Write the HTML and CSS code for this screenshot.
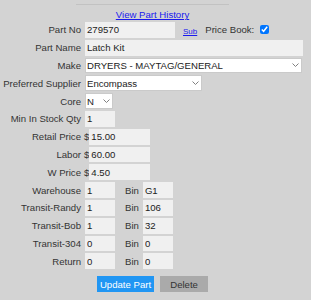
FILE: index.html
```html
<!DOCTYPE html>
<html>
<head>
    <title>Edit Part</title>
    <link rel="stylesheet" href="styles.css">
</head>
<body>
    <div class="part-form">
        <hr>
        <div class="history"><a href="#">View Part History</a></div>

        <div class="rows">
            <div class="row">
                <label>Part No</label>
                <div class="field">
                    <input type="text" class="w-no" value="279570"><a href="#" class="sub-link">Sub</a><span class="price-book">Price Book:</span><input type="checkbox" class="check" checked>
                </div>
            </div>
            <div class="row">
                <label>Part Name</label>
                <div class="field"><input type="text" class="w-name" value="Latch Kit"></div>
            </div>
            <div class="row">
                <label>Make</label>
                <div class="field">
                    <select class="w-make"><option>DRYERS - MAYTAG/GENERAL</option></select>
                </div>
            </div>
            <div class="row">
                <label>Preferred Supplier</label>
                <div class="field">
                    <select class="w-supplier"><option>Encompass</option></select>
                </div>
            </div>
            <div class="row">
                <label>Core</label>
                <div class="field">
                    <select class="w-core"><option>N</option><option>Y</option></select>
                </div>
            </div>
            <div class="row">
                <label>Min In Stock Qty</label>
                <div class="field"><input type="text" class="w-small" value="1"></div>
            </div>
            <div class="row">
                <label>Retail Price</label>
                <div class="field"><span class="dollar">$</span><input type="text" class="w-price" value="15.00"></div>
            </div>
            <div class="row">
                <label>Labor</label>
                <div class="field"><span class="dollar">$</span><input type="text" class="w-price" value="60.00"></div>
            </div>
            <div class="row">
                <label>W Price</label>
                <div class="field"><span class="dollar">$</span><input type="text" class="w-price" value="4.50"></div>
            </div>
            <div class="row">
                <label>Warehouse</label>
                <div class="field"><input type="text" class="w-small" value="1"><span class="bin">Bin</span><input type="text" class="w-small" value="G1"></div>
            </div>
            <div class="row">
                <label>Transit-Randy</label>
                <div class="field"><input type="text" class="w-small" value="1"><span class="bin">Bin</span><input type="text" class="w-small" value="106"></div>
            </div>
            <div class="row">
                <label>Transit-Bob</label>
                <div class="field"><input type="text" class="w-small" value="1"><span class="bin">Bin</span><input type="text" class="w-small" value="32"></div>
            </div>
            <div class="row">
                <label>Transit-304</label>
                <div class="field"><input type="text" class="w-small" value="0"><span class="bin">Bin</span><input type="text" class="w-small" value="0"></div>
            </div>
            <div class="row">
                <label>Return</label>
                <div class="field"><input type="text" class="w-small" value="0"><span class="bin">Bin</span><input type="text" class="w-small" value="0"></div>
            </div>
        </div>

        <div class="actions">
            <button class="btn-update">Update Part</button>
            <button class="btn-delete">Delete</button>
        </div>
    </div>
</body>
</html>
```

FILE: styles.css
```css
body {
    margin: 0;
    background: #d3d3d3;
    font-family: 'Liberation Sans', Arial, sans-serif;
    font-size: 0.6rem;
    color: #333;
}

.part-form {
    width: 305px;
    padding-top: 4px;
}

hr {
    width: 50%;
    margin: 0 auto;
    border: none;
    border-top: 1px solid #c2c2c2;
}

.history {
    margin-top: 3px;
    line-height: 14px;
    text-align: center;
}

a {
    color: #1a1aee;
}

.rows {
    display: flex;
    flex-direction: column;
    gap: 2px;
}

.row {
    display: grid;
    grid-template-columns: 81px auto;
    column-gap: 3px;
    align-items: center;
}

.row label {
    text-align: right;
    white-space: nowrap;
}

.field {
    display: flex;
    align-items: center;
    white-space: nowrap;
}

input[type="text"], select {
    font: inherit;
    color: #222;
    height: 15.8px;
    box-sizing: border-box;
    margin: 0 0 0 1px;
}

input[type="text"] {
    border: none;
    background: #f0f0f0;
    padding: 0 2px;
}

select {
    appearance: none;
    -webkit-appearance: none;
    background: #fff url("data:image/svg+xml;utf8,<svg xmlns='http://www.w3.org/2000/svg' width='7' height='4'><path d='M0.5 0.5l3 3 3-3' fill='none' stroke='%23808080'/></svg>") no-repeat right 2px center;
    border: 1px solid #cacaca;
    border-radius: 0;
    padding: 0 10px 0 1px;
}

.w-no { width: 90px; }
.w-name { width: 218px; }
.w-make { width: 217px; }
.w-supplier { width: 117px; }
.w-core { width: 28px; }
.w-small { width: 30px; }
.w-price { width: 61px; }

.field .dollar + input {
    margin-left: 0;
}

.sub-link {
    font-size: 8px;
    margin-left: 8px;
    align-self: baseline;
    position: relative;
    top: 5px;
}

.price-book {
    margin-left: 8px;
}

.check {
    width: 9px;
    height: 9px;
    margin: 0 0 0 6px;
}

.bin {
    margin: 0 3px 0 10px;
}

.actions {
    display: flex;
    justify-content: center;
    gap: 6px;
    margin-top: 7px;
}

.actions button {
    font: inherit;
    height: 16px;
    border: none;
    border-radius: 0;
    padding: 0 3px;
    cursor: pointer;
}

.btn-update {
    background: #2196f3;
    color: #fff;
}

.btn-delete {
    background: #aaa;
    color: #333;
    width: 48px;
}
```
